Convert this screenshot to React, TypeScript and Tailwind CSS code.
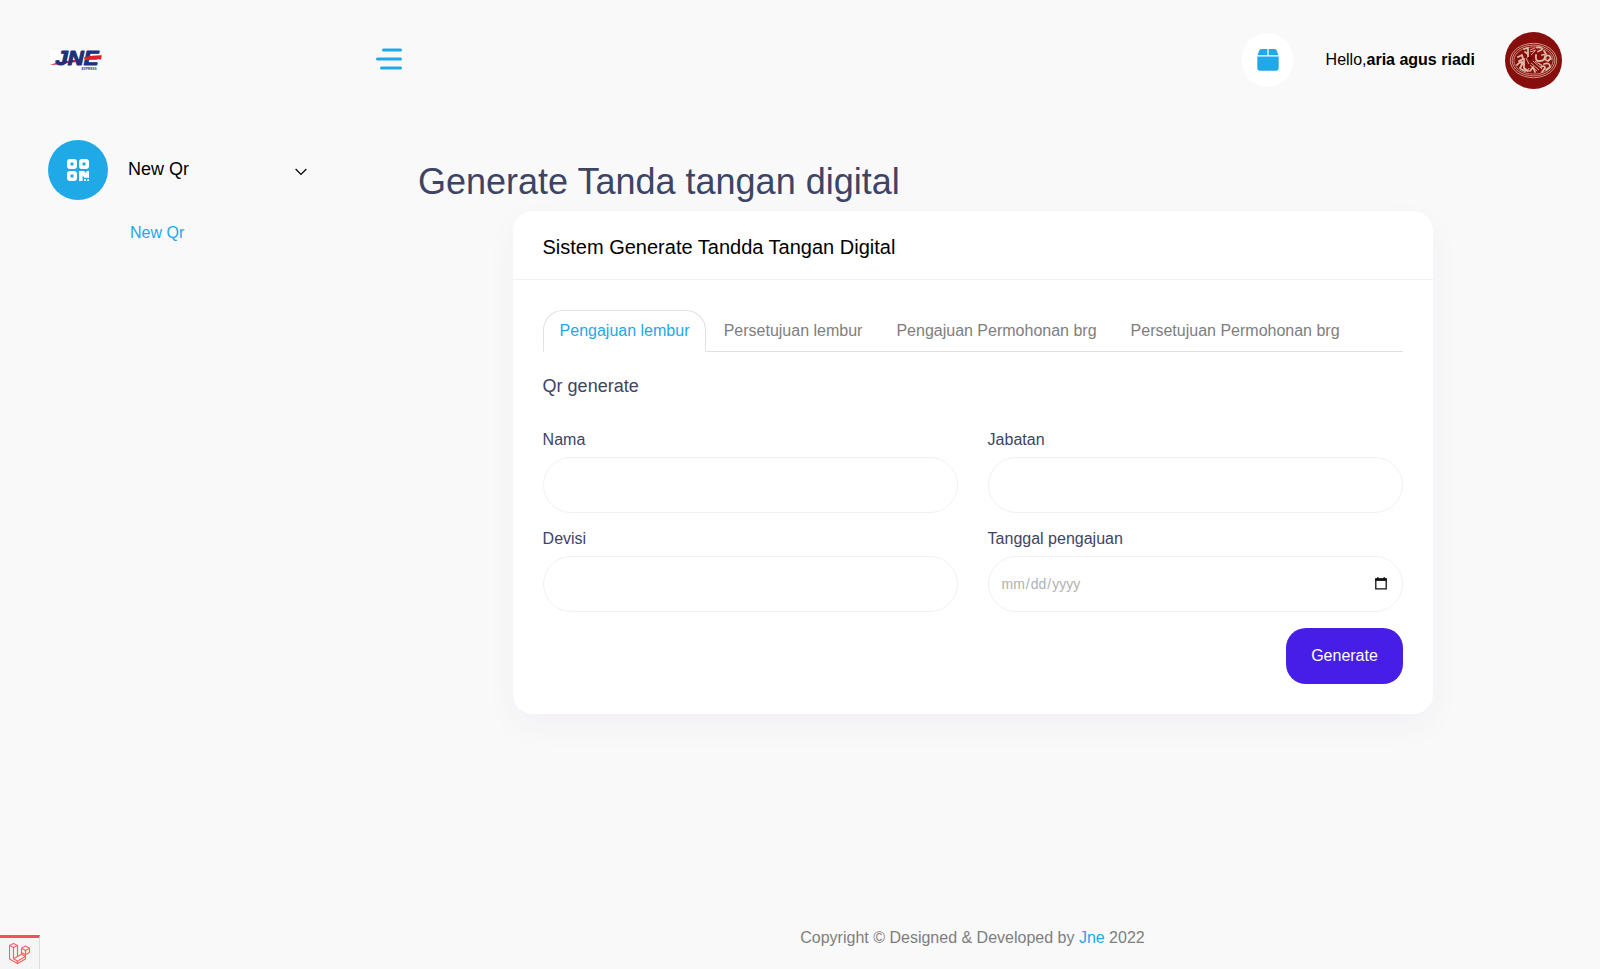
import React from "react";

function Logo() {
  return (
    <svg viewBox="0 0 52 20" className="h-5 w-[52px] overflow-visible" aria-label="JNE Express">
      <rect width="48" height="20" fill="#fff" />
      <path d="M0 15 L7 12.6 L30 9 L30 11.4 L8 14.4 Z" fill="#e01f2b" />
      <text x="5.5" y="14.6" textLength="43" lengthAdjust="spacingAndGlyphs" fontSize="19.5" fontWeight="700" fontStyle="italic" fill="#20307c" stroke="#20307c" strokeWidth="1.1" strokeLinejoin="round" fontFamily="Liberation Sans, sans-serif">
        JNE
      </text>
      <path d="M34 7.2 Q43 5 51.8 5.2 L51 9.4 Q42 9 35 10.6 Z" fill="#e01f2b" />
      <text x="31.5" y="19.6" textLength="15" lengthAdjust="spacingAndGlyphs" fontSize="4.4" fontWeight="700" fill="#20307c" fontFamily="Liberation Sans, sans-serif">
        EXPRESS
      </text>
    </svg>
  );
}

function MenuIcon() {
  return (
    <svg viewBox="0 0 26 22" className="h-[22px] w-[26px]" stroke="#20a9e7" strokeWidth="3" strokeLinecap="round">
      <path d="M7.5 2H24.5M1.5 11H24.5M5.5 20H24.5" />
    </svg>
  );
}

function BoxIcon() {
  return (
    <svg viewBox="0 0 22 22" className="h-[22px] w-[22px]" fill="#20a9e7">
      <path d="M4.6 0H10.4V6.3H.6L2 2Q2.7 0 4.6 0Z" />
      <path d="M11.6 0H17.4Q19.3 0 20 2L21.4 6.3H11.6Z" />
      <path d="M.3 7.6H21.7V19Q21.7 21.8 18.9 21.8H3.1Q.3 21.8 .3 19Z" />
    </svg>
  );
}

function QrIcon() {
  return (
    <svg viewBox="0 0 22 22" className="h-[22px] w-[22px]" fill="#fff">
      <path fillRule="evenodd" d="M3 0H7Q10 0 10 3V7Q10 10 7 10H3Q0 10 0 7V3Q0 0 3 0ZM3.5 3.5V6.5H6.5V3.5Z" />
      <path fillRule="evenodd" d="M15 0H19Q22 0 22 3V7Q22 10 19 10H15Q12 10 12 7V3Q12 0 15 0ZM15.5 3.5V6.5H18.5V3.5Z" />
      <path fillRule="evenodd" d="M3 12H7Q10 12 10 15V19Q10 22 7 22H3Q0 22 0 19V15Q0 12 3 12ZM3.5 15.5V18.5H6.5V15.5Z" />
      <path d="M12 12H17L19.3 14.5V12H22V18.8H17.5L15.6 16.5V22H12ZM17 20.2H19V22H17ZM20.2 20.2H22V22H20.2Z" />
    </svg>
  );
}

function Avatar() {
  return (
    <svg viewBox="0 0 57 57" className="size-[57px]" fill="none" stroke="#dfb9a6">
      <circle cx="28.5" cy="28.5" r="28.5" fill="#860e0c" stroke="none" />
      <ellipse cx="28.5" cy="28.5" rx="23.2" ry="17.2" strokeWidth="0.8" />
      <ellipse cx="28.5" cy="28.5" rx="21.4" ry="15.4" strokeWidth="0.8" />
      <ellipse cx="28.5" cy="28.5" rx="19.6" ry="13.6" strokeWidth="0.7" />
      <g strokeWidth="1.8" strokeLinecap="round" strokeLinejoin="round">
        <path d="M13 25l4-2 1 4-4 2M12 33q3-4 6-2l-3 5M19 17l4-1v9M20 20l3 2M19 27v9l4 3M16 37l4 2" />
        <path d="M32 15.5q5-1 5 2l-4 2M39 19l2 3-4 1M31 23q-1 7 4 6 5 0 5-5M46 27q-1-5-5-3-2 4 2 5l2-2M39 32q6-2 6 3l-4 3M36 35q4-2 4 1l-3 4M25 39l3-4 2 5" />
      </g>
      <g strokeWidth="0.9">
        <path d="M25 18l5-2M25 20l6-2M26 23l4-4M26 31l8 7M25 33l7 6M28 29l9 8M30 29l7 5M24 36l-2 4M17 27l-1 8M14 29l4 1M21 26l3 6M33 31l4 2" />
      </g>
      <path d="M22.5 25h5l-2.5 4z" fill="#5f0707" stroke="none" />
    </svg>
  );
}

function LaravelIcon() {
  return (
    <svg viewBox="0 0 21 21" className="h-[21px] w-[21px]" fill="none" stroke="#f4645f" strokeWidth="1.15" strokeLinejoin="round">
      <path d="M.5 2.5L4.5.5 8.5 2.5V13.5L12.5 11.2V5.2L16.5 3 20.5 5.2V9.5L16.5 11.8V16L8.5 20.5.5 16Z" />
      <path d="M.5 2.5L4.5 4.6 8.5 2.5M4.5 4.6V15.8L8.5 18V20.5M8.5 18L16.5 13.4M4.5 15.8L8.5 13.5M12.5 5.2L16.5 7.4 20.5 5.2M16.5 7.4V11.8L12.5 9.5M12.5 11.2L16.5 13.4" />
    </svg>
  );
}

function CalendarIcon() {
  return (
    <svg viewBox="0 0 12 13" className="mb-px h-[13px] w-3" fill="none" stroke="#111">
      <path d="M.8 2V11.9H11.2V2Z" strokeWidth="1.3" />
      <path d="M.3 2.7H11.7" strokeWidth="2.4" />
      <path d="M2.8 0V2M9.2 0V2" strokeWidth="1.2" />
    </svg>
  );
}

const tabs = ["Pengajuan lembur", "Persetujuan lembur", "Pengajuan Permohonan brg", "Persetujuan Permohonan brg"];

function Field({ label, date }: { label: string; date?: boolean }) {
  return (
    <div>
      <label className="-ml-[0.4px] mb-[5px] block h-6 text-base leading-6 text-[#3d4465]">{label}</label>
      <div className="flex h-14 items-center justify-between rounded-[28px] border border-[#f0f1f5] pr-[15px] pl-[12.5px] text-sm text-[#b1b1b1]">
        {date && (
          <>
            <span className="flex gap-px">
              <span>mm</span>
              <span>/</span>
              <span>dd</span>
              <span>/</span>
              <span>yyyy</span>
            </span>
            <CalendarIcon />
          </>
        )}
      </div>
    </div>
  );
}

export default function App() {
  return (
    <div className="relative flex h-[969px] w-full flex-col overflow-hidden bg-[#f9f9f9] font-['Liberation_Sans',Arial,sans-serif] text-black">
      <header className="flex h-[120px] shrink-0 items-center pr-[38px] pl-[50px]">
        <Logo />
        <div className="ml-[274px] flex pb-[2px]">
          <MenuIcon />
        </div>
        <div className="ml-auto flex items-center">
          <div className="flex h-[54px] w-[51px] items-center justify-center rounded-full bg-white">
            <BoxIcon />
          </div>
          <p className="ml-[32.5px] text-base leading-6 whitespace-nowrap">
            Hello,<strong>aria agus riadi</strong>
          </p>
          <div className="ml-[30px] pt-px">
            <Avatar />
          </div>
        </div>
      </header>

      <div className="flex min-h-0 flex-1">
        <aside className="w-[344px] shrink-0 pt-5 pl-12">
          <div className="flex h-[60px] items-center">
            <div className="flex size-[60px] items-center justify-center rounded-full bg-[#20a9e7]">
              <QrIcon />
            </div>
            <span className="ml-5 pb-[2px] text-lg leading-7">New Qr</span>
            <svg viewBox="0 0 12 8" className="mt-[3px] ml-[106px] h-2 w-3" fill="none" stroke="#000" strokeWidth="1.2">
              <path d="M.6 1L6 6.5 11.4 1" />
            </svg>
          </div>
          <a className="mt-[21px] ml-[82px] block text-base leading-6 text-[#20a9e7]">New Qr</a>
        </aside>

        <main className="flex min-w-0 flex-1 flex-col pt-10 pr-[42px] pl-[74px]">
          <h1 className="h-[51px] text-[36px] leading-[43px] text-[#3d4465]">Generate Tanda tangan digital</h1>
          <section className="ml-[95px] h-[503px] w-[920px] rounded-[20px] bg-white shadow-[0_12px_33px_0_rgba(82,7,120,0.04)]">
            <div className="flex h-[69px] items-center border-b border-[#f0f1f5] px-[29.5px] pt-[3px]">
              <h4 className="text-xl leading-[30px]">Sistem Generate Tandda Tangan Digital</h4>
            </div>
            <div className="px-[30px] pt-[30px]">
              <nav className="flex border-b border-[#dee2e6]">
                {tabs.map((tab, i) => (
                  <a
                    key={tab}
                    className={
                      i === 0
                        ? "mr-[0.6px] -mb-px h-[42px] rounded-t-[20px] border border-[#dee2e6] border-b-white bg-white px-[15.6px] py-2 text-base leading-6 text-[#20a9e7]"
                        : "-mb-px h-[42px] border border-transparent px-4 py-2 text-base leading-6 text-[#7e7e7e]"
                    }
                  >
                    {tab}
                  </a>
                ))}
              </nav>
              <h5 className="mt-[21px] -ml-[0.4px] h-[55px] text-lg leading-[27px] text-[#3d4465]">Qr generate</h5>
              <div className="grid grid-cols-2 gap-x-[30px] gap-y-[14px]">
                <Field label="Nama" />
                <Field label="Jabatan" />
                <Field label="Devisi" />
                <Field label="Tanggal pengajuan" date />
              </div>
              <div className="mt-4 flex justify-end">
                <button className="h-14 w-[117px] rounded-[20px] bg-[#461ee7] text-base text-white">Generate</button>
              </div>
            </div>
          </section>
          <footer className="mt-auto pr-[31px] pb-[19px] text-center text-base leading-6 text-[#7e7e7e]">
            Copyright © Designed &amp; Developed by <a className="text-[#20a9e7]">Jne</a> 2022
          </footer>
        </main>
      </div>

      <div className="absolute bottom-0 left-0 flex h-[34px] w-10 justify-center border-t-[3px] border-r border-t-[#f4515f] border-r-[#ddd] bg-[#f5f5f5] pt-[5px]">
        <LaravelIcon />
      </div>
    </div>
  );
}
